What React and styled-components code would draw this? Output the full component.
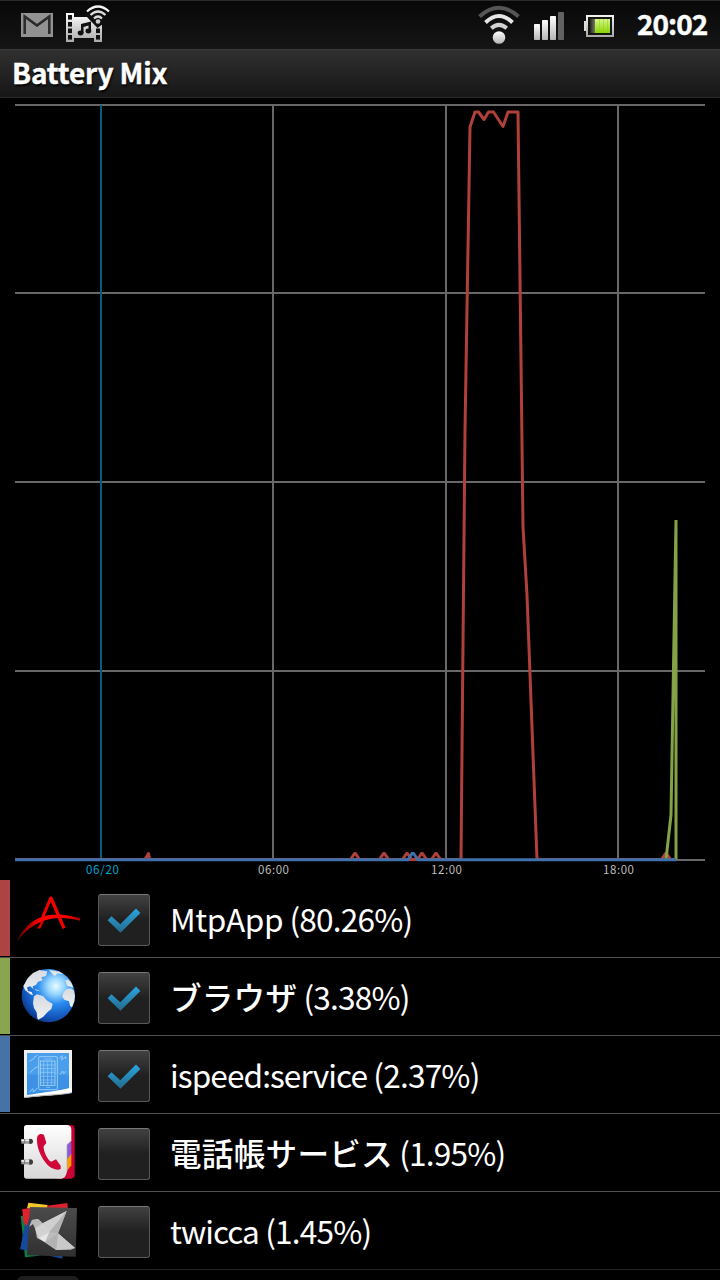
import React from 'react'
import styled, { createGlobalStyle } from 'styled-components'

const GlobalStyle = createGlobalStyle`
    * {
        box-sizing: border-box;
    }
    body {
        margin: 0;
        background-color: #000;
        overflow: hidden;
    }
`
const Screen = styled.div`
    width: 720px;
    height: 1280px;
    overflow: hidden;
    background-color: #000;
    color: #fff;
    font-family: "Noto Sans CJK JP", "Noto Sans", sans-serif;
`
const StatusBar = styled.div`
    display: flex;
    align-items: flex-start;
    justify-content: space-between;
    height: 50px;
    padding: 0 12px 0 20px;
    background: linear-gradient(#080808, #151515);
    border-top: 1px solid #2b2b2b;
    border-bottom: 1px solid #3b3b3b;
`
const IconGroup = styled.div`
    display: flex;
    align-items: flex-start;
`
const StatusIcon = styled.svg`
    display: block;
    width: ${props => props.$width}px;
    height: 48px;
    margin-right: ${props => props.$gap || 0}px;
`
const Clock = styled.div`
    font-size: 28px;
    font-weight: 700;
    line-height: 45px;
    width: 71px;
    white-space: nowrap;
    letter-spacing: -1px;
    -webkit-text-stroke: 0.4px #fff;
`
const TitleBar = styled.div`
    height: 48px;
    padding-left: 12px;
    background: linear-gradient(#303030, #161616);
    border-bottom: 1px solid #272727;
`
const Title = styled.h1`
    margin: 0;
    font-size: 28px;
    font-weight: 700;
    line-height: 45px;
    letter-spacing: -0.15px;
    -webkit-text-stroke: 0.4px #fff;
    text-shadow: 1px 2px 2px #000;
`
const ChartBox = styled.svg`
    display: block;
    width: 720px;
    height: 782px;
`
const Row = styled.div`
    display: flex;
    align-items: flex-start;
    height: 78px;
    border-bottom: 1px solid ${props => props.$last ? '#242424' : '#505050'};
`
const ColorBar = styled.div`
    width: 10px;
    height: 76px;
    background-color: ${props => props.$color};
`
const AppIcon = styled.svg`
    display: block;
    width: 64px;
    height: 64px;
    margin: 6px 18px 0 6px;
`
const CheckBox = styled.div`
    width: 52px;
    height: 52px;
    margin-top: 14px;
    border: 1px solid #585858;
    border-top-color: #777;
    border-radius: 3px;
    background: linear-gradient(#414141, #202020 50%, #202020);
`
const CheckSvg = styled.svg`
    display: block;
    width: 50px;
    height: 50px;
`
const Label = styled.div`
    padding-left: 20px;
    font-size: 31.6px;
    line-height: 77px;
    white-space: pre;
`
const Name = styled.span`
    font-weight: ${props => props.$japanese ? 500 : 400};
    letter-spacing: ${props => props.$spacing}px;
`
const Percent = styled.span`
    letter-spacing: -0.8px;
`
const NextRow = styled.div`
    height: 10px;
    padding: 6px 0 0 17px;
`
const NextIcon = styled.div`
    width: 62px;
    height: 20px;
    border-radius: 6px;
    background-color: #1e1e1e;
`

const MailIcon = () => (
    <StatusIcon $width={34} $gap={10} viewBox="20 1 34 48">
        <rect x="21" y="13" width="32" height="24" fill="#929292" />
        <path d="M24.7 34V16.5L37 25.5L49.3 16.5V34" fill="none" stroke="#2c2c2c" strokeWidth="2.6" />
        <path d="M24 16L37 25.5L50 16" fill="none" stroke="#2c2c2c" strokeWidth="2" />
    </StatusIcon>
)

const MediaIcon = () => (
    <StatusIcon $width={46} viewBox="64 1 46 48">
        <defs>
            <linearGradient id="media" x1="0" y1="0" x2="0" y2="1">
                <stop offset="0" stopColor="#fff" />
                <stop offset="1" stopColor="#aaa" />
            </linearGradient>
        </defs>
        <path d="M66 13H74V17H102V42H94V38H74V42H66Z" fill="url(#media)" />
        <g fill="#111">
            {[15, 22, 28.5, 35].map(y => <rect key={y} x="68" y={y} width="4" height="4.6" />)}
            {[28.5, 35].map(y => <rect key={y} x="96" y={y} width="4" height="4.6" />)}
            <path d="M86 16L97.5 28L103 24V14H86Z" />
            <path d="M81 24L91 21.5V31H88.5V25.5L83.5 27V33H81Z" />
            <ellipse cx="80.6" cy="33" rx="2.9" ry="2.4" />
            <ellipse cx="88.4" cy="31" rx="2.9" ry="2.4" />
        </g>
        <g fill="none" stroke="#ddd" strokeWidth="2.2">
            <path d="M87 11.5Q98 1.5 109 11.5" stroke="#f5f5f5" />
            <path d="M90.5 15Q98 8 105.5 15" />
            <path d="M94 18.5Q98 14.5 102 18.5" />
        </g>
        <circle cx="98" cy="21.5" r="2.3" fill="#ccc" />
    </StatusIcon>
)

const WifiIcon = () => (
    <StatusIcon $width={44} $gap={11} viewBox="477 1 44 48">
        <defs>
            <linearGradient id="silver" x1="0" y1="0" x2="0" y2="1">
                <stop offset="0" stopColor="#fff" />
                <stop offset="1" stopColor="#b5b5b5" />
            </linearGradient>
        </defs>
        <g fill="none" strokeWidth="4">
            <path d="M479.5 16.5Q499 -1 518.5 16.5" stroke="#555" />
            <path d="M485.5 22.5Q499 9.5 512.5 22.5" stroke="#e6e6e6" />
            <path d="M491.3 28.3Q499 21.5 506.7 28.3" stroke="#d2d2d2" />
        </g>
        <circle cx="499" cy="37.5" r="6.3" fill="url(#silver)" />
    </StatusIcon>
)

const SignalIcon = () => (
    <StatusIcon $width={34} $gap={16} viewBox="532 1 34 48">
        <rect x="534" y="24" width="6" height="16" rx="0.8" fill="url(#silver)" />
        <rect x="542" y="20" width="6" height="20" rx="0.8" fill="url(#silver)" />
        <rect x="550" y="16" width="6" height="24" rx="0.8" fill="url(#silver)" />
        <rect x="558" y="12" width="6" height="28" rx="0.8" fill="#626262" />
    </StatusIcon>
)

const BatteryIcon = () => (
    <StatusIcon $width={34} $gap={21} viewBox="582 1 34 48">
        <defs>
            <linearGradient id="charge" x1="0" y1="0" x2="0" y2="1">
                <stop offset="0" stopColor="#d9f58a" />
                <stop offset="1" stopColor="#86d600" />
            </linearGradient>
            <linearGradient id="drained">
                <stop offset="0" stopColor="#222" />
                <stop offset="1" stopColor="#777a66" />
            </linearGradient>
            <linearGradient id="shell" x1="0" y1="0" x2="0" y2="1">
                <stop offset="0" stopColor="#f2f2f2" />
                <stop offset="1" stopColor="#aaa" />
            </linearGradient>
        </defs>
        <rect x="584" y="21" width="3" height="10" fill="#ddd" />
        <rect x="587" y="16" width="26" height="20" fill="#15180c" stroke="url(#shell)" strokeWidth="2" />
        <rect x="590" y="19" width="5" height="14" fill="url(#drained)" />
        <rect x="595" y="19" width="15" height="14" fill="url(#charge)" />
        <path d="M599.5 19V33M603.5 19V33M607.5 19V33" stroke="#8fd020" strokeWidth="0.5" />
    </StatusIcon>
)

const gridRows = [105, 293, 482, 671, 860]
const gridCols = [273, 446, 618]
const bumps = [355, 384, 407, 422, 436, 666]

const Chart = () => (
    <ChartBox viewBox="0 98 720 782">
        <g stroke="#686868" strokeWidth="2">
            {gridRows.map(y => <path key={y} d={`M15 ${y}H705`} />)}
            {gridCols.map(x => <path key={x} d={`M${x} 105V860`} />)}
            <path d="M101 105V860" stroke="#006078" />
        </g>
        <g fill="none" stroke="#b0403a" strokeWidth="3" strokeLinejoin="round">
            <path d="M15 859.5H145L148.5 853.5L149.5 859.5H461L465 430L470 127L475 112H478.5L484 119.5L488.5 112H493.5L503 126.5L508 112H518L523 527L527 595L537 859.5H676" />
            {bumps.map(x => <path key={x} d={`M${x - 4.5} 859.5L${x - 0.5} 853.5H${x + 0.5}L${x + 4.5} 859.5`} />)}
        </g>
        <path d="M666 859.5L671 815L676 520V859.5" fill="none" stroke="#84a347" strokeWidth="3" strokeLinejoin="bevel" />
        <path d="M15 859.8H408L412 853.5H413.5L418 859.8H676" fill="none" stroke="#4070ac" strokeWidth="3" />
        <g fontSize="11.5" fill="#bdbdbd">
            <text x="86" y="874" fill="#00a5cf" textLength="33">06/20</text>
            <text x="258" y="874" textLength="31">06:00</text>
            <text x="431" y="874" textLength="31">12:00</text>
            <text x="603" y="874" textLength="31">18:00</text>
        </g>
    </ChartBox>
)

const SwooshIcon = () => (
    <AppIcon viewBox="0 0 192 192">
        <defs>
            <linearGradient id="swoosh">
                <stop offset="0" stopColor="#500" />
                <stop offset="0.35" stopColor="#f00" />
                <stop offset="0.8" stopColor="#f00" />
                <stop offset="1" stopColor="#a00" />
            </linearGradient>
        </defs>
        <path d="M2 168C26 110 84 62 192 97V104C100 80 42 114 2 168Z" fill="url(#swoosh)" />
        <path d="M105 36L144 127" fill="none" stroke="#f30000" strokeWidth="10" />
        <path d="M105 34L79 96" fill="none" stroke="#f30000" strokeWidth="9" />
        <path d="M99 40L105 29L111 40Z" fill="#f00" />
        <path d="M75 108L84 104L74 127L63 128Z" fill="#e00000" />
    </AppIcon>
)

const GlobeIcon = () => (
    <AppIcon viewBox="0 0 192 192">
        <defs>
            <radialGradient id="ocean" cx="0.64" cy="0.32" r="0.75">
                <stop offset="0" stopColor="#e8fbff" />
                <stop offset="0.2" stopColor="#9bd8ff" />
                <stop offset="0.45" stopColor="#2b8cf0" />
                <stop offset="0.8" stopColor="#1253b8" />
                <stop offset="1" stopColor="#0a327c" />
            </radialGradient>
            <linearGradient id="land" x1="0" y1="0" x2="0" y2="1">
                <stop offset="0" stopColor="#d5dbe2" />
                <stop offset="1" stopColor="#f0f0f0" />
            </linearGradient>
        </defs>
        <circle cx="97" cy="95" r="80" fill="url(#ocean)" />
        <g fill="url(#land)">
            <path d="M27 58L35 43L51 27L70 18L94 22L90 36L76 40L80 49L66 53L60 63L50 67L52 75L43 67L33 70L36 81L47 84L51 94L43 91L27 78L22 66Z" />
            <path d="M98 17L130 23L142 31L125 28L116 36L107 27Z" />
            <path d="M54 97L63 91L81 96L92 109L110 120L106 135L94 145L82 158L67 167L64 163L62 145L54 132L51 117Z" />
            <path d="M142 87L150 76L165 73L173 79L177 95L175 112L168 130L162 125L159 112L145 107L139 98Z" />
            <path d="M148 50L155 46L165 55L172 71L160 67L154 65Z" />
            <path d="M55 75L66 78L72 82L60 79Z" />
        </g>
    </AppIcon>
)

const BlueprintIcon = () => (
    <AppIcon viewBox="0 0 192 192">
        <path d="M24 24H168V152C130 158 90 160 24 167Z" fill="#f0f0f0" />
        <path d="M33 33H159V138C130 146 90 153 33 158Z" fill="#4a9fec" />
        <path d="M33 98H159V138C130 146 90 153 33 158Z" fill="#3c92e4" />
        <path d="M60 155C100 149 135 145 167 138V152C130 159 90 159 24 167Z" fill="#fff" />
        <path d="M24 167C90 158 130 160 168 152" stroke="#aaa" strokeWidth="3" fill="none" />
        <g fill="none" stroke="#a8d5fb" strokeWidth="2.5">
            <rect x="68" y="44" width="56" height="99" rx="4" />
            <rect x="73" y="57" width="44" height="73" />
            <path d="M84 51H109M73 69H117M73 80H117M73 91H117M73 103H117M73 114H117M73 122H117M83 57V130M95 57V130M107 57V130M90 136H103" strokeWidth="1.7" />
            <path d="M40 58L56 48M54 46L65 40M42 92L53 82M53 80L66 74M130 48L139 41L137 54L148 44L150 51M132 98L140 87L143 95L150 88M41 150L50 140L53 150L64 138" />
        </g>
    </AppIcon>
)

const PhonebookIcon = () => (
    <AppIcon viewBox="0 0 192 192">
        <defs>
            <linearGradient id="page" x1="0" y1="0" x2="0" y2="1">
                <stop offset="0" stopColor="#fff" />
                <stop offset="1" stopColor="#d7d7d7" />
            </linearGradient>
        </defs>
        <path d="M120 15H165Q176 15 176 27V163Q176 176 164 176H120Z" fill="#cb0034" />
        <path d="M166 61V105L152 126V72Z" fill="#875bd9" />
        <path d="M166 102V136L152 153V120Z" fill="#fa9f00" />
        <path d="M32 15H154Q166 17 166 29V62L153 74V154Q150 175 136 176H32Q24 176 24 168V23Q24 15 32 15Z" fill="url(#page)" />
        <path d="M166 62L153 74V154" fill="none" stroke="#aaa" strokeWidth="2" />
        <path d="M73 42Q64 44 63 55C61 91 86 134 109 145Q124 152 134 147L134 137L120 118L109 124Q104 127 98 119C87 105 82 87 83 79L91 69L84 45Q80 41 73 42Z" fill="#cf0839" />
        {[64, 126].map(y => (
            <g key={y}>
                <circle cx="43" cy={y} r="8" fill="#3a3a3a" />
                <rect x="16" y={y - 7} width="24" height="14" fill="#999" />
                <path d={`M16 ${y - 3}H39`} stroke="#f2f2f2" strokeWidth="5" />
                <path d={`M26 ${y - 7}V${y + 7}`} stroke="#777" strokeWidth="3" />
            </g>
        ))}
    </AppIcon>
)

const BirdIcon = () => (
    <AppIcon viewBox="0 0 192 192">
        <defs>
            <linearGradient id="tile" x1="0" y1="0" x2="0" y2="1">
                <stop offset="0" stopColor="#4b4b4b" />
                <stop offset="1" stopColor="#303030" />
            </linearGradient>
        </defs>
        <path d="M14 54L27 178L70 173L50 50Z" fill="#0b8043" />
        <path d="M32 55L13 153L139 182L150 100Z" fill="#17499a" />
        <path d="M19 34L154 15L160 80L32 120Z" fill="#dd222b" />
        <path d="M37 14L95 21L90 35L33 31Z" fill="#f3c62c" />
        <path d="M32 55L13 153L60 160L60 60Z" fill="#17499a" />
        <path d="M19 34L40 31L40 60L32 85L22 70Z" fill="#dd222b" />
        <path d="M42 27L183 30L179 176L33 172Z" fill="url(#tile)" />
        <path d="M40 86L48 66L66 63L80 76L152 39L126 106L177 150L164 155L121 156L87 133L63 120L57 90L51 77Z" fill="#bdbdbd" />
        <path d="M80 76L152 39L100 103L80 110Z" fill="#cfcfcf" />
        <path d="M152 39L126 106L100 103Z" fill="#b2b2b2" />
        <path d="M57 90L80 76L100 103L68 119Z" fill="#d2d2d2" />
        <path d="M87 133L126 106L177 150L121 156Z" fill="#c9c9c9" />
        <path d="M68 119L100 103L87 133Z" fill="#e6e6e6" />
        <path d="M87 133L126 106L121 156Z" fill="#b2b2b2" />
        <path d="M40 86L48 66L66 63L80 76L57 90L51 77Z" fill="#b8b8b8" />
    </AppIcon>
)

const CheckMark = () => (
    <CheckSvg viewBox="1 1 50 50">
        <defs>
            <linearGradient id="check" x1="0" y1="0" x2="0" y2="1">
                <stop offset="0" stopColor="#2ba5e0" />
                <stop offset="1" stopColor="#246a8c" />
            </linearGradient>
        </defs>
        <path d="M9.6 26.2L13.5 22.3L22.3 30.2L38 14.6L42.4 19L22.5 38.8Z" fill="url(#check)" />
    </CheckSvg>
)

const apps = [
    { name: 'MtpApp', percent: '80.26%', color: '#ab4442', checked: true, spacing: -0.4, Icon: SwooshIcon },
    { name: 'ブラウザ', percent: '3.38%', color: '#89a54e', checked: true, spacing: 0.2, japanese: true, Icon: GlobeIcon },
    { name: 'ispeed:service', percent: '2.37%', color: '#4572a7', checked: true, spacing: -0.92, Icon: BlueprintIcon },
    { name: '電話帳サービス', percent: '1.95%', color: 'transparent', spacing: 0.25, japanese: true, Icon: PhonebookIcon },
    { name: 'twicca', percent: '1.45%', color: 'transparent', spacing: -1, Icon: BirdIcon },
]

const App = () => {
    return (
        <Screen>
            <GlobalStyle />
            <StatusBar>
                <IconGroup>
                    <MailIcon />
                    <MediaIcon />
                </IconGroup>
                <IconGroup>
                    <WifiIcon />
                    <SignalIcon />
                    <BatteryIcon />
                    <Clock>20:02</Clock>
                </IconGroup>
            </StatusBar>
            <TitleBar>
                <Title>Battery Mix</Title>
            </TitleBar>
            <Chart />
            {
                apps.map(({ name, percent, color, checked, spacing, japanese, Icon }, index) => (
                    <Row key={name} $last={index === apps.length - 1}>
                        <ColorBar $color={color} />
                        <Icon />
                        <CheckBox>{checked && <CheckMark />}</CheckBox>
                        <Label>
                            <Name $japanese={japanese} $spacing={spacing}>{name}</Name>
                            <Percent>{` (${percent})`}</Percent>
                        </Label>
                    </Row>
                ))
            }
            <NextRow>
                <NextIcon />
            </NextRow>
        </Screen>
    )
}

export default App
